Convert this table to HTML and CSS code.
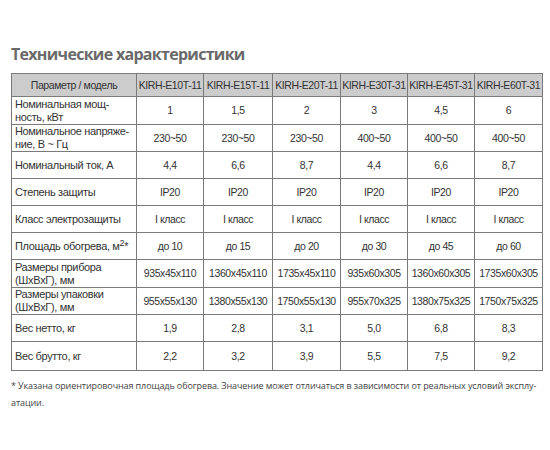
FILE: index.html
```html
<!DOCTYPE html>
<html lang="ru">
<head>
<meta charset="utf-8">
<link rel="stylesheet" href="styles.css">
</head>
<body>
<div class="page">
  <h2 class="title">Технические характеристики</h2>
  <table class="specs">
    <colgroup>
      <col class="c-param"><col class="c1"><col class="c2"><col class="c3"><col class="c4"><col class="c5"><col class="c6">
    </colgroup>
    <thead>
      <tr class="r-head">
        <th class="center">Параметр / модель</th>
        <th>KIRH-E10T-11</th><th>KIRH-E15T-11</th><th>KIRH-E20T-11</th><th>KIRH-E30T-31</th><th>KIRH-E45T-31</th><th>KIRH-E60T-31</th>
      </tr>
    </thead>
    <tbody>
      <tr class="r1"><td class="p">Номинальная мощ-<br>ность, кВт</td><td>1</td><td>1,5</td><td>2</td><td>3</td><td>4,5</td><td>6</td></tr>
      <tr class="r2"><td class="p">Номинальное напряже-<br>ние, В ~ Гц</td><td>230~50</td><td>230~50</td><td>230~50</td><td>400~50</td><td>400~50</td><td>400~50</td></tr>
      <tr class="r3"><td class="p">Номинальный ток, А</td><td>4,4</td><td>6,6</td><td>8,7</td><td>4,4</td><td>6,6</td><td>8,7</td></tr>
      <tr class="r4"><td class="p">Степень защиты</td><td>IP20</td><td>IP20</td><td>IP20</td><td>IP20</td><td>IP20</td><td>IP20</td></tr>
      <tr class="r5"><td class="p">Класс электрозащиты</td><td>I класс</td><td>I класс</td><td>I класс</td><td>I класс</td><td>I класс</td><td>I класс</td></tr>
      <tr class="r6"><td class="p">Площадь обогрева, м<sup>2</sup>*</td><td>до 10</td><td>до 15</td><td>до 20</td><td>до 30</td><td>до 45</td><td>до 60</td></tr>
      <tr class="r7"><td class="p">Размеры прибора<br>(ШxВxГ), мм</td><td>935x45x110</td><td>1360x45x110</td><td>1735x45x110</td><td>935x60x305</td><td>1360x60x305</td><td>1735x60x305</td></tr>
      <tr class="r8"><td class="p">Размеры упаковки<br>(ШxВxГ), мм</td><td>955x55x130</td><td>1380x55x130</td><td>1750x55x130</td><td>955x70x325</td><td>1380x75x325</td><td>1750x75x325</td></tr>
      <tr class="r9"><td class="p">Вес нетто, кг</td><td>1,9</td><td>2,8</td><td>3,1</td><td>5,0</td><td>6,8</td><td>8,3</td></tr>
      <tr class="r10"><td class="p">Вес брутто, кг</td><td>2,2</td><td>3,2</td><td>3,9</td><td>5,5</td><td>7,5</td><td>9,2</td></tr>
    </tbody>
  </table>
  <p class="note">* Указана ориентировочная площадь обогрева. Значение может отличаться в зависимости от реальных условий эксплу-<br>атации.</p>
</div>
</body>
</html>
```

FILE: styles.css
```css
html, body {
  margin: 0;
  padding: 0;
  background: #ffffff;
}
.page {
  padding: 45px 8px 0 11px;
}
.title {
  margin: 0 0 10px 0;
  font-family: "Open Sans", "DejaVu Sans", sans-serif;
  font-weight: 700;
  font-size: 16px;
  line-height: 18px;
  color: #6a6a6a;
  letter-spacing: -0.7px;
}
.specs {
  border-collapse: collapse;
  table-layout: fixed;
  width: 531px;
  font-family: "Liberation Sans", Arial, sans-serif;
  font-size: 10.5px;
  letter-spacing: -0.4px;
  color: #333333;
  border: 1.5px solid #808080;
}
.c-param { width: 125px; }
.c1 { width: 67px; }
.c2 { width: 69px; }
.c3 { width: 68px; }
.c4 { width: 67px; }
.c5 { width: 67px; }
.c6 { width: 68px; }
.specs th, .specs td {
  border: 1px solid #7a7a7a;
  padding: 0;
  text-align: center;
  vertical-align: middle;
  line-height: 13px;
  white-space: nowrap;
  overflow: hidden;
}
.specs th {
  background: #cccccc;
  font-weight: 400;
  color: #333333;
}
.specs td.p {
  text-align: left;
  padding-left: 3px;
  font-size: 11px;
  letter-spacing: -0.35px;
}
.specs sup {
  font-size: 9px;
  line-height: 0;
  vertical-align: 4px;
}
.r-head { height: 23px; }
.r1 { height: 28px; }
.r2 { height: 27px; }
.r3 { height: 27px; }
.r4 { height: 27px; }
.r5 { height: 27px; }
.r6 { height: 27px; }
.r7 { height: 28px; }
.r8 { height: 27px; }
.r9 { height: 27px; }
.r10 { height: 29px; }
.note {
  margin: 6px 0 0 0;
  font-family: "Open Sans", "DejaVu Sans", sans-serif;
  font-size: 9px;
  letter-spacing: -0.1px;
  line-height: 17px;
  color: #444444;
  white-space: nowrap;
}
```
